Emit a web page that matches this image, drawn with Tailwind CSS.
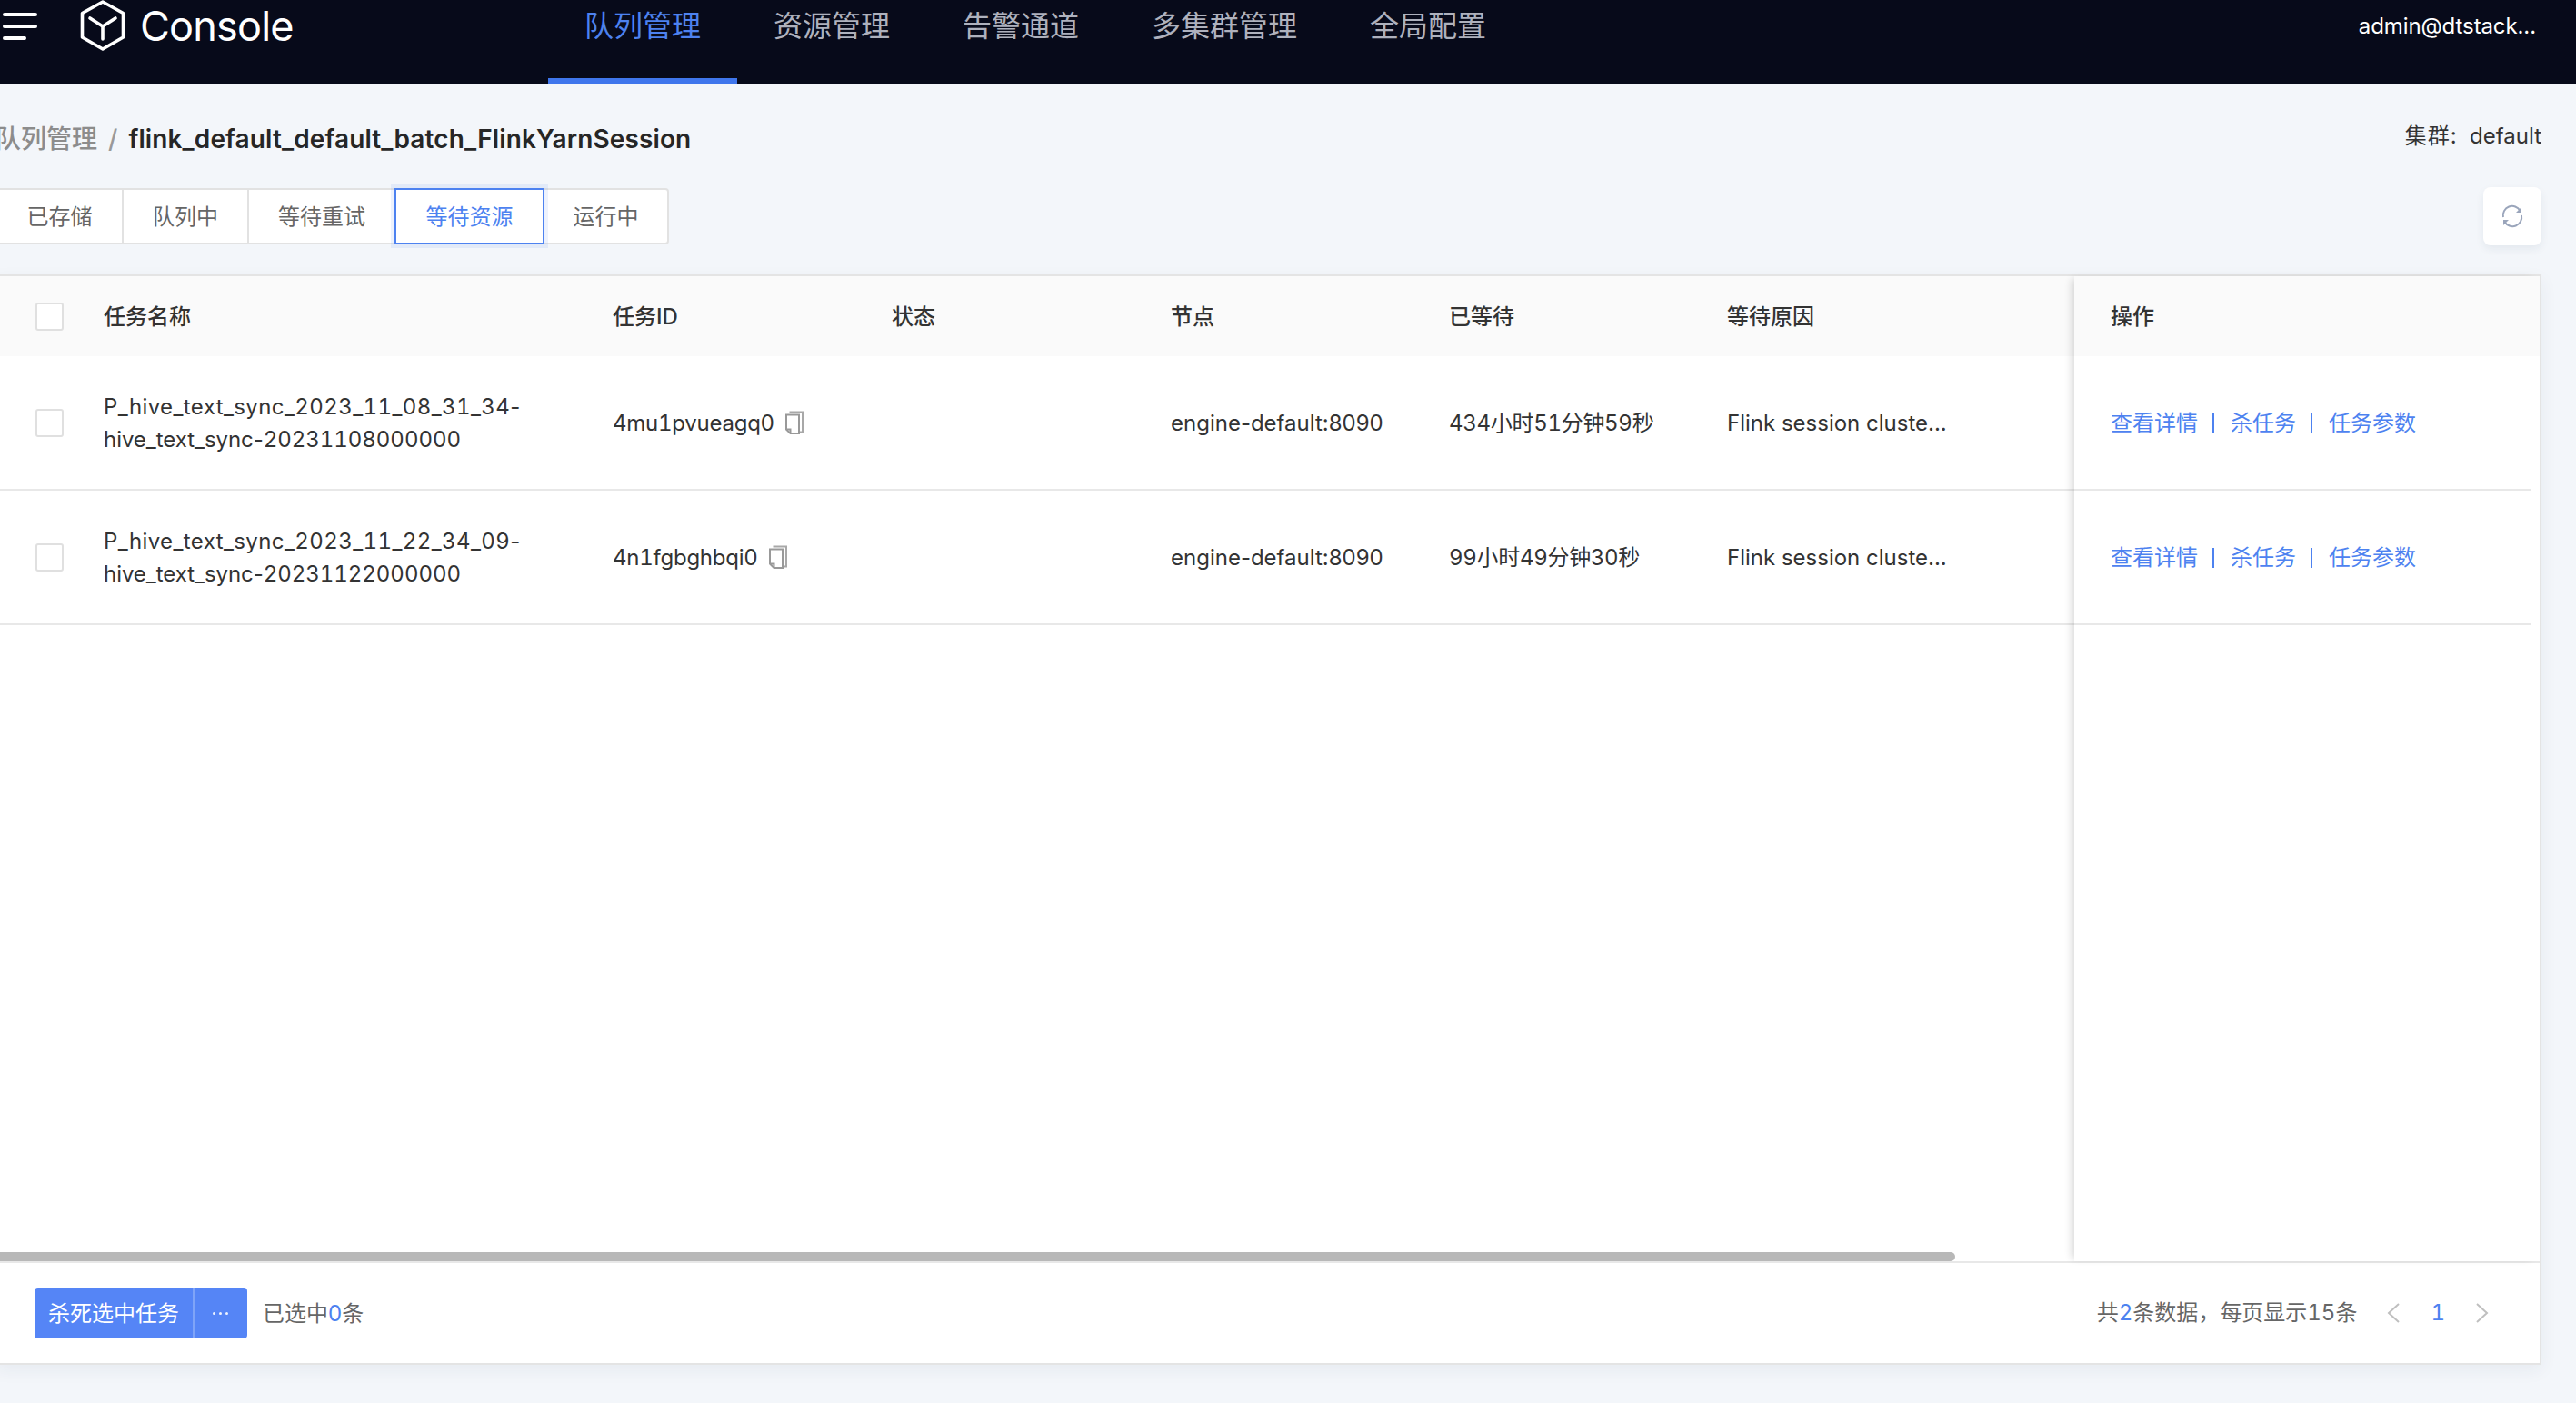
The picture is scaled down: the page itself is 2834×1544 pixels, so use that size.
<!DOCTYPE html>
<html lang="en">
<head>
    <meta charset="UTF-8">
    <title>Console - 队列管理</title>
    <script src="https://cdn.jsdelivr.net/npm/@tailwindcss/browser@4"></script>
</head>
<body class="w-[2834px] h-[1544px] overflow-hidden bg-[#f3f6fa] text-[24px] text-[#333] font-['Inter','Noto_Sans_CJK_SC',sans-serif]">

    <!-- Top bar -->
    <header class="h-[92px] bg-[#070a1a] flex items-start relative">
        <div class="w-[88px] shrink-0 pl-[3px] pt-[14px] flex flex-col gap-[9px]">
            <span class="block w-[38px] h-[4px] rounded-full bg-white"></span>
            <span class="block w-[38px] h-[4px] rounded-full bg-white"></span>
            <span class="block w-[26px] h-[4px] rounded-full bg-white"></span>
        </div>
        <svg class="w-[50px] h-[56px] shrink-0" viewBox="0 0 50 56" fill="none" stroke="#fff" stroke-width="3.6" stroke-linejoin="round" stroke-linecap="round">
            <path d="M25 2 L47.500 14.500 V41 L25 54 L2.500 41 V14.500 Z"/>
            <path d="M11 20 L25 29 L39 20 M25 29 V43"/>
        </svg>
        <div class="w-[465px] shrink-0 pl-[16px] h-[56px] leading-[58px] text-[45px] text-white tracking-[-0.8px]">Console</div>
        <nav class="flex text-[32px] leading-[58px] text-[#aeb1bd]">
            <a class="block h-[92px] px-[40px] w-[208px] text-[#4d82f0] border-b-[6px] border-[#3f76ec]">队列管理</a>
            <a class="block px-[40px] w-[208px]">资源管理</a>
            <a class="block px-[40px] w-[208px]">告警通道</a>
            <a class="block px-[40px] w-[240px]">多集群管理</a>
            <a class="block px-[40px] w-[208px]">全局配置</a>
        </nav>
        <div class="ml-auto pr-[44px] h-[56px] leading-[58px] text-white tracking-[-0.1px]">admin@dtstack...</div>
    </header>

    <main class="ml-[-5px] mr-[38px]">
        <!-- Breadcrumb -->
        <div class="h-[40px] mt-[41px] flex items-center justify-between">
            <div class="flex items-center text-[28px]">
                <span class="text-[#8c8c8c] font-medium">队列管理</span>
                <span class="text-[#999] mx-[12px] font-medium">/</span>
                <span class="font-semibold text-[#262626] tracking-[0.12px]">flink_default_default_batch_FlinkYarnSession</span>
            </div>
            <div class="-mt-[6px] text-[#333]"><span class="tracking-[1px]">集群:</span>&nbsp;&nbsp;default</div>
        </div>

        <!-- Status tabs -->
        <div class="mt-[34px] flex items-start justify-between">
            <div class="flex h-[62px] bg-white border-2 border-[#e2e2e2] rounded-[4px] text-[#666] leading-[60px] text-center">
                <div class="w-[139px] border-r-2 border-[#e2e2e2]">已存储</div>
                <div class="w-[138px] border-r-2 border-[#e2e2e2]">队列中</div>
                <div class="w-[160px]">等待重试</div>
                <div class="w-[165px] -my-[2px] h-[62px] border-2 border-[#4d82f0] text-[#4d82f0] shadow-[0_0_0_4px_rgba(77,130,240,0.1)] relative">等待资源</div>
                <div class="w-[135px]">运行中</div>
            </div>
            <button class="w-[64px] h-[64px] -mt-[1px] bg-white rounded-[8px] shadow-[0_4px_10px_rgba(30,50,90,0.07)] flex items-center justify-center">
                <svg class="w-[26px] h-[26px]" viewBox="0 0 26 26" fill="none" stroke="#9aa5bb" stroke-width="2">
                    <path d="M3 14 A10 10 0 0 1 21.500 7"/>
                    <path d="M23 12 A10 10 0 0 1 4.500 19"/>
                    <path d="M23 3 V9 H17 Z" fill="#9aa5bb" stroke="none"/>
                    <path d="M3 23 V17 H9 Z" fill="#9aa5bb" stroke="none"/>
                </svg>
            </button>
        </div>

        <!-- Table card -->
        <section class="mt-[32px] h-[1200px] flex flex-col bg-white border-2 border-[#e4e4e4] shadow-[0_6px_18px_rgba(30,50,90,0.06)]">
            <div class="flex-1 flex min-h-0">
                <div class="flex-1 min-w-0 flex flex-col">
                    <div class="grid grid-cols-[117px_560px_307px_307px_306px_306px_1fr] h-[88px] items-center bg-[#fafafa] font-medium text-[#333] pt-[1px]">
                        <div class="pl-[42px]"><span class="block w-[31px] h-[31px] bg-white border-2 border-[#e0e0e0] rounded-[3px]"></span></div>
                        <div>任务名称</div>
                        <div>任务ID</div>
                        <div>状态</div>
                        <div>节点</div>
                        <div>已等待</div>
                        <div>等待原因</div>
                    </div>

                    <div class="grid grid-cols-[117px_560px_307px_307px_306px_306px_1fr] h-[148px] items-center border-b-2 border-[#e8e8e8] leading-[36px] pt-[2px]">
                        <div class="pl-[42px] -mt-[2px]"><span class="block w-[31px] h-[31px] bg-white border-2 border-[#e0e0e0] rounded-[3px]"></span></div>
                        <div><span class="tracking-[0.4px]">P_hive_text_sync_<span class="tabular-nums">2023_11_08_31_34</span>-</span><br><span class="tracking-[-0.05px]">hive_text_sync-<span class="tabular-nums">20231108000000</span></span></div>
                        <div class="flex items-center gap-[12px] tabular-nums tracking-[-0.25px]">4mu1pvueagq0
                            <svg class="w-[20px] h-[26px] -mt-[2px]" viewBox="0 0 20 26" fill="none" stroke="#a8a8a8" stroke-width="2"><path d="M4.500 1.500 H19 V23.500 H16"/><path d="M1 4.500 H15 V25 H5.500 L1 20.500 Z" stroke="#999"/><path d="M1 20.500 H5.500 V25" stroke="#999"/></svg>
                        </div>
                        <div></div>
                        <div>engine-default:8090</div>
                        <div class="tabular-nums tracking-[-0.3px]">434小时51分钟59秒</div>
                        <div>Flink session cluste...</div>
                    </div>

                    <div class="grid grid-cols-[117px_560px_307px_307px_306px_306px_1fr] h-[148px] items-center border-b-2 border-[#e8e8e8] leading-[36px] pt-[2px]">
                        <div class="pl-[42px] -mt-[2px]"><span class="block w-[31px] h-[31px] bg-white border-2 border-[#e0e0e0] rounded-[3px]"></span></div>
                        <div><span class="tracking-[0.4px]">P_hive_text_sync_<span class="tabular-nums">2023_11_22_34_09</span>-</span><br><span class="tracking-[-0.05px]">hive_text_sync-<span class="tabular-nums">20231122000000</span></span></div>
                        <div class="flex items-center gap-[12px] tabular-nums tracking-[-0.25px]">4n1fgbghbqi0
                            <svg class="w-[20px] h-[26px] -mt-[2px]" viewBox="0 0 20 26" fill="none" stroke="#a8a8a8" stroke-width="2"><path d="M4.500 1.500 H19 V23.500 H16"/><path d="M1 4.500 H15 V25 H5.500 L1 20.500 Z" stroke="#999"/><path d="M1 20.500 H5.500 V25" stroke="#999"/></svg>
                        </div>
                        <div></div>
                        <div>engine-default:8090</div>
                        <div class="tabular-nums tracking-[-0.3px]">99小时49分钟30秒</div>
                        <div>Flink session cluste...</div>
                    </div>

                    <!-- Horizontal scrollbar -->
                    <div class="mt-auto h-[10px] w-[2154px] bg-[#b8b8b8] rounded-r-full"></div>
                </div>

                <!-- Fixed action column -->
                <div class="w-[512px] shrink-0 bg-white shadow-[-6px_0_8px_-3px_rgba(0,0,0,0.14)] relative">
                    <div class="h-[88px] pl-[40px] pt-[1px] flex items-center bg-[#fafafa] font-medium">操作</div>
                    <div class="h-[148px] mr-[10px] pl-[40px] pt-[1px] flex items-center border-b-2 border-[#e8e8e8] text-[#4d82f0]">
                        <a>查看详情</a><span class="w-[2px] h-[22px] bg-[#4d82f0] ml-[16px] mr-[18px]"></span><a>杀任务</a><span class="w-[2px] h-[22px] bg-[#4d82f0] ml-[16px] mr-[18px]"></span><a>任务参数</a>
                    </div>
                    <div class="h-[148px] mr-[10px] pl-[40px] pt-[1px] flex items-center border-b-2 border-[#e8e8e8] text-[#4d82f0]">
                        <a>查看详情</a><span class="w-[2px] h-[22px] bg-[#4d82f0] ml-[16px] mr-[18px]"></span><a>杀任务</a><span class="w-[2px] h-[22px] bg-[#4d82f0] ml-[16px] mr-[18px]"></span><a>任务参数</a>
                    </div>
                </div>
            </div>

            <!-- Footer -->
            <footer class="h-[112px] shrink-0 border-t-2 border-[#e8e8e8] flex items-center justify-between pl-[41px] pr-[56px]">
                <div class="flex items-center">
                    <div class="flex h-[56px] bg-[#5585f6] rounded-[4px] text-white items-center">
                        <span class="w-[174px] text-center pt-[2px]">杀死选中任务</span>
                        <span class="w-[60px] h-full pr-[2px] border-l-2 border-[#7fa4f8] flex items-center justify-center gap-[4px]">
                            <span class="w-[3px] h-[3px] rounded-full bg-white/90"></span>
                            <span class="w-[3px] h-[3px] rounded-full bg-white/90"></span>
                            <span class="w-[3px] h-[3px] rounded-full bg-white/90"></span>
                        </span>
                    </div>
                    <div class="ml-[17px] text-[#666] pt-[2px]">已选中<span class="text-[#4d82f0]">0</span>条</div>
                </div>
                <div class="flex items-center text-[#666] tabular-nums">
                    <div>共<span class="text-[#4d82f0]">2</span>条数据，每页显示15条</div>
                    <svg class="w-[14px] h-[24px] ml-[33px]" viewBox="0 0 14 24" fill="none" stroke="#bfbfbf" stroke-width="2"><path d="M13 2 L2 12 L13 22"/></svg>
                    <span class="ml-[34px] text-[#4d82f0]">1</span>
                    <svg class="w-[14px] h-[24px] ml-[34px]" viewBox="0 0 14 24" fill="none" stroke="#bfbfbf" stroke-width="2"><path d="M1 2 L12 12 L1 22"/></svg>
                </div>
            </footer>
        </section>
    </main>
</body>
</html>
